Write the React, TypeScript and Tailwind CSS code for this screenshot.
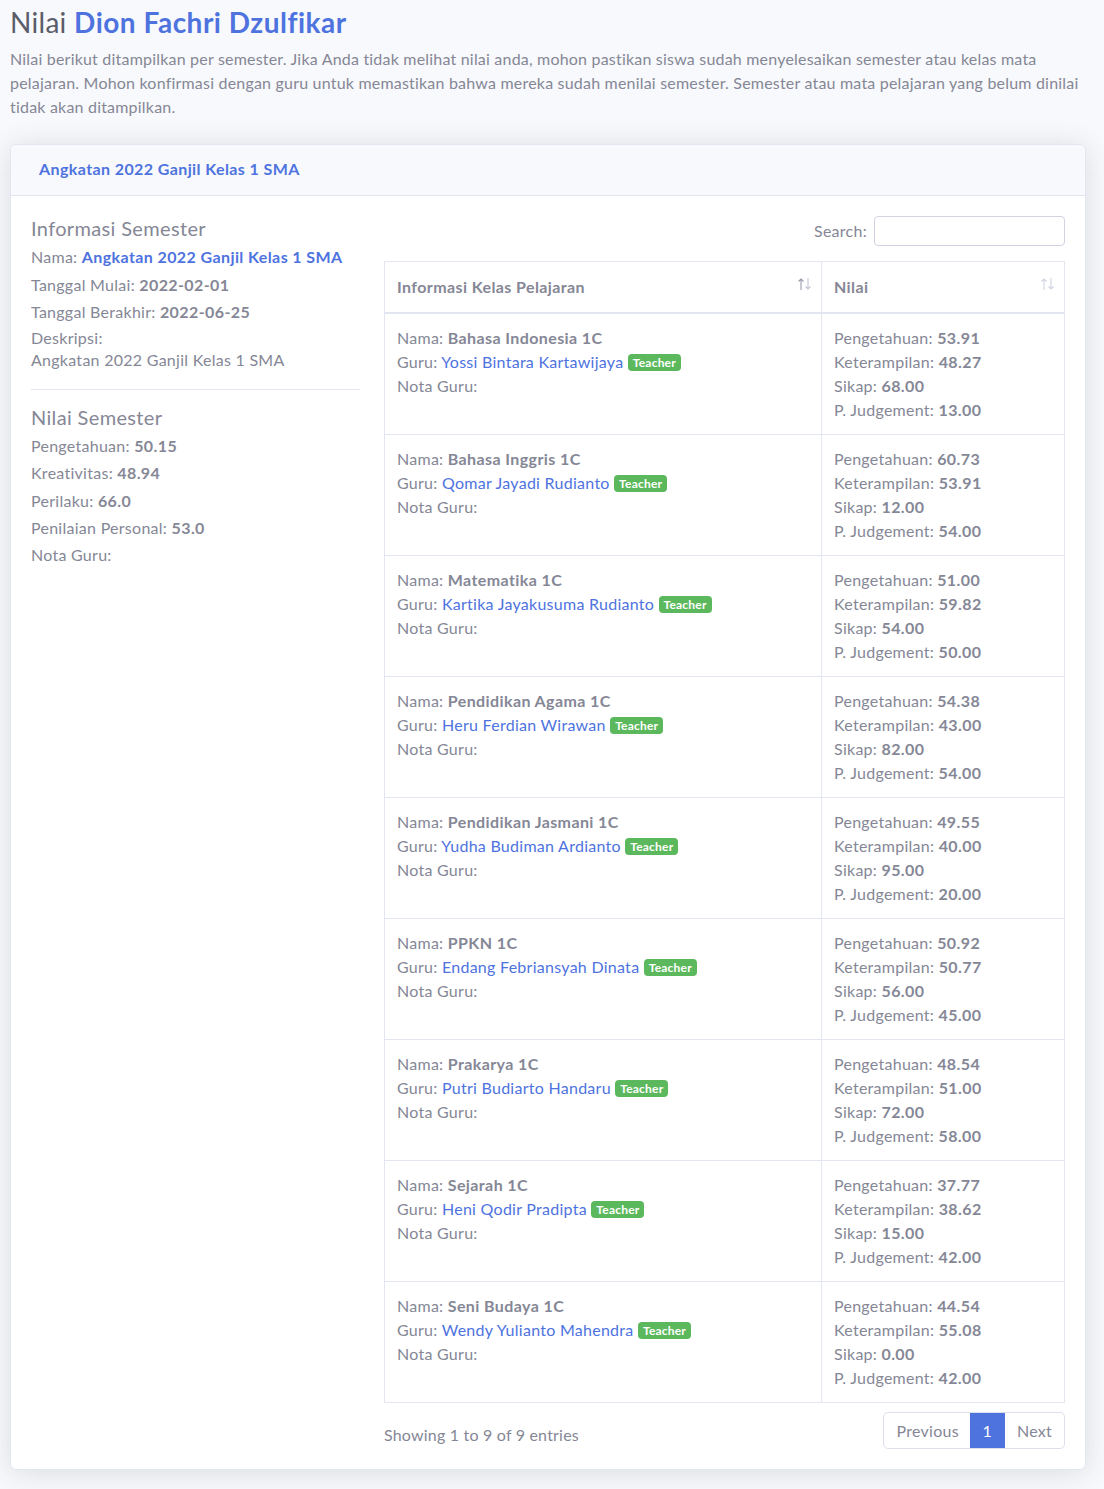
import React from "react";

const rows = [
  { n: "Bahasa Indonesia 1C", g: "Yossi Bintara Kartawijaya", v: ["53.91", "48.27", "68.00", "13.00"] },
  { n: "Bahasa Inggris 1C", g: "Qomar Jayadi Rudianto", v: ["60.73", "53.91", "12.00", "54.00"] },
  { n: "Matematika 1C", g: "Kartika Jayakusuma Rudianto", v: ["51.00", "59.82", "54.00", "50.00"] },
  { n: "Pendidikan Agama 1C", g: "Heru Ferdian Wirawan", v: ["54.38", "43.00", "82.00", "54.00"] },
  { n: "Pendidikan Jasmani 1C", g: "Yudha Budiman Ardianto", v: ["49.55", "40.00", "95.00", "20.00"] },
  { n: "PPKN 1C", g: "Endang Febriansyah Dinata", v: ["50.92", "50.77", "56.00", "45.00"] },
  { n: "Prakarya 1C", g: "Putri Budiarto Handaru", v: ["48.54", "51.00", "72.00", "58.00"] },
  { n: "Sejarah 1C", g: "Heni Qodir Pradipta", v: ["37.77", "38.62", "15.00", "42.00"] },
  { n: "Seni Budaya 1C", g: "Wendy Yulianto Mahendra", v: ["44.54", "55.08", "0.00", "42.00"] },
];

function B({ children, className = "" }: { children: React.ReactNode; className?: string }) {
  return <span className={"font-bold tracking-[0.4px] " + className}>{children}</span>;
}

function SortIcon({ dark }: { dark?: boolean }) {
  const c1 = dark ? "#9a9cab" : "#d1d3e2";
  const c2 = dark ? "#c4c6d3" : "#d1d3e2";
  return (
    <svg width="16" height="14" viewBox="0 0 16 14" fill="none">
      <path d="M4 13V2M1.5 4.5L4 2l2.5 2.5" stroke={c1} strokeWidth="1.1" />
      <path d="M11 1v11M8.5 9.5L11 12l2.5-2.5" stroke={c2} strokeWidth="1.1" />
    </svg>
  );
}

export default function App() {
  const font = { fontFamily: "Lato, 'Noto Sans', sans-serif" };
  return (
    <div className="min-h-[1489px] bg-[#f8f9fc] pl-[10px] pr-[18px] pt-[5px] text-[16px] tracking-[0.27px] text-[#858796]" style={font}>
      <h3 className="text-[28px] leading-[34px] tracking-[0.3px] text-[#5a5c69]">
        Nilai <span className="font-bold tracking-[0.5px] text-[#4e73df]">Dion Fachri Dzulfikar</span>
      </h3>
      <p className="-mr-[2px] mt-[8px] leading-[24px] tracking-[0.2px]">
        Nilai berikut ditampilkan per semester. Jika Anda tidak melihat nilai anda, mohon pastikan siswa sudah menyelesaikan semester atau kelas mata pelajaran. Mohon konfirmasi dengan guru untuk memastikan bahwa mereka sudah menilai semester. Semester atau mata pelajaran yang belum dinilai tidak akan ditampilkan.
      </p>
      <div className="mt-[25px] rounded-[6px] border border-[#e3e6f0] bg-white shadow-[0_0.15rem_1.75rem_0_rgba(58,59,69,0.15)]">
        <div className="flex h-[51px] items-center rounded-t-[6px] border-b border-[#e3e6f0] bg-[#f8f9fc] pb-[3px] pl-[28px]">
          <B className="text-[#4e73df]">Angkatan 2022 Ganjil Kelas 1 SMA</B>
        </div>
        <div className="flex px-[20px] pb-[20px] pt-[20px]">
          <div className="w-[329px] shrink-0">
            <h5 className="text-[20px] leading-[24px] tracking-[0.35px]">Informasi Semester</h5>
            <div className="mt-[5px] leading-[24px]">
              Nama: <B className="text-[#4e73df]">Angkatan 2022 Ganjil Kelas 1 SMA</B>
            </div>
            <div className="mt-[4px] leading-[24px]">
              Tanggal Mulai: <B>2022-02-01</B>
            </div>
            <div className="mt-[3px] leading-[24px]">
              Tanggal Berakhir: <B>2022-06-25</B>
            </div>
            <div className="mt-[3px] leading-[22px]">
              Deskripsi:
              <br />
              Angkatan 2022 Ganjil Kelas 1 SMA
            </div>
            <hr className="mb-[15px] mt-[18px] border-t border-[#e3e6f0]" />
            <h5 className="text-[20px] leading-[24px] tracking-[0.35px]">Nilai Semester</h5>
            <div className="mt-[5px] leading-[24px]">
              Pengetahuan: <B>50.15</B>
            </div>
            <div className="mt-[3px] leading-[24px]">
              Kreativitas: <B>48.94</B>
            </div>
            <div className="mt-[4px] leading-[24px]">
              Perilaku: <B>66.0</B>
            </div>
            <div className="mt-[3px] leading-[24px]">
              Penilaian Personal: <B>53.0</B>
            </div>
            <div className="mt-[3px] leading-[24px]">Nota Guru:</div>
          </div>
          <div className="ml-[24px] min-w-0 flex-1">
            <div className="mb-[15px] flex items-center justify-end">
              <label className="mr-[7px] leading-[24px]">Search:</label>
              <input className="h-[30px] w-[191px] rounded-[4px] border border-[#d1d3e2] bg-white outline-none" />
            </div>
            <table className="w-full border-collapse">
              <thead>
                <tr>
                  <th className="w-[437px] border border-b-2 border-[#e3e6f0] px-[12px] py-[13px] text-left align-middle font-bold leading-[24px] tracking-[0.4px]">
                    <div className="flex items-center justify-between">
                      <span>Informasi Kelas Pelajaran</span>
                      <span className="-mr-[4px] -mt-[6px]"><SortIcon dark /></span>
                    </div>
                  </th>
                  <th className="border border-b-2 border-[#e3e6f0] px-[12px] py-[13px] text-left align-middle font-bold leading-[24px] tracking-[0.4px]">
                    <div className="flex items-center justify-between">
                      <span>Nilai</span>
                      <span className="-mr-[4px] -mt-[6px]"><SortIcon /></span>
                    </div>
                  </th>
                </tr>
              </thead>
              <tbody>
                {rows.map((r) => (
                  <tr key={r.n}>
                    <td className="h-[121px] border border-[#e3e6f0] px-[12px] py-[12px] align-top leading-[24px]">
                      <div>
                        Nama: <B>{r.n}</B>
                      </div>
                      <div>
                        Guru: <span className="text-[#4e73df]">{r.g}</span>{" "}
                        <span className="relative -top-[1px] inline-block rounded-[4px] bg-[#5cb85c] px-[5px] text-[12px] font-bold leading-[17px] tracking-[0.2px] text-white">
                          Teacher
                        </span>
                      </div>
                      <div>Nota Guru:</div>
                    </td>
                    <td className="border border-[#e3e6f0] px-[12px] py-[12px] align-top leading-[24px]">
                      <div>
                        Pengetahuan: <B>{r.v[0]}</B>
                      </div>
                      <div>
                        Keterampilan: <B>{r.v[1]}</B>
                      </div>
                      <div>
                        Sikap: <B>{r.v[2]}</B>
                      </div>
                      <div>
                        P. Judgement: <B>{r.v[3]}</B>
                      </div>
                    </td>
                  </tr>
                ))}
              </tbody>
            </table>
            <div className="mt-[9px] flex items-center justify-between">
              <div className="pt-[8px] leading-[24px] tracking-[0.2px]">Showing 1 to 9 of 9 entries</div>
              <div className="flex h-[37px] overflow-hidden rounded-[5px] border border-[#dddfeb]">
                <div className="flex items-center pl-[12px] pr-[11px]">Previous</div>
                <div className="flex w-[35px] items-center justify-center bg-[#4e73df] text-white">1</div>
                <div className="flex items-center px-[12px]">Next</div>
              </div>
            </div>
          </div>
        </div>
      </div>
    </div>
  );
}
